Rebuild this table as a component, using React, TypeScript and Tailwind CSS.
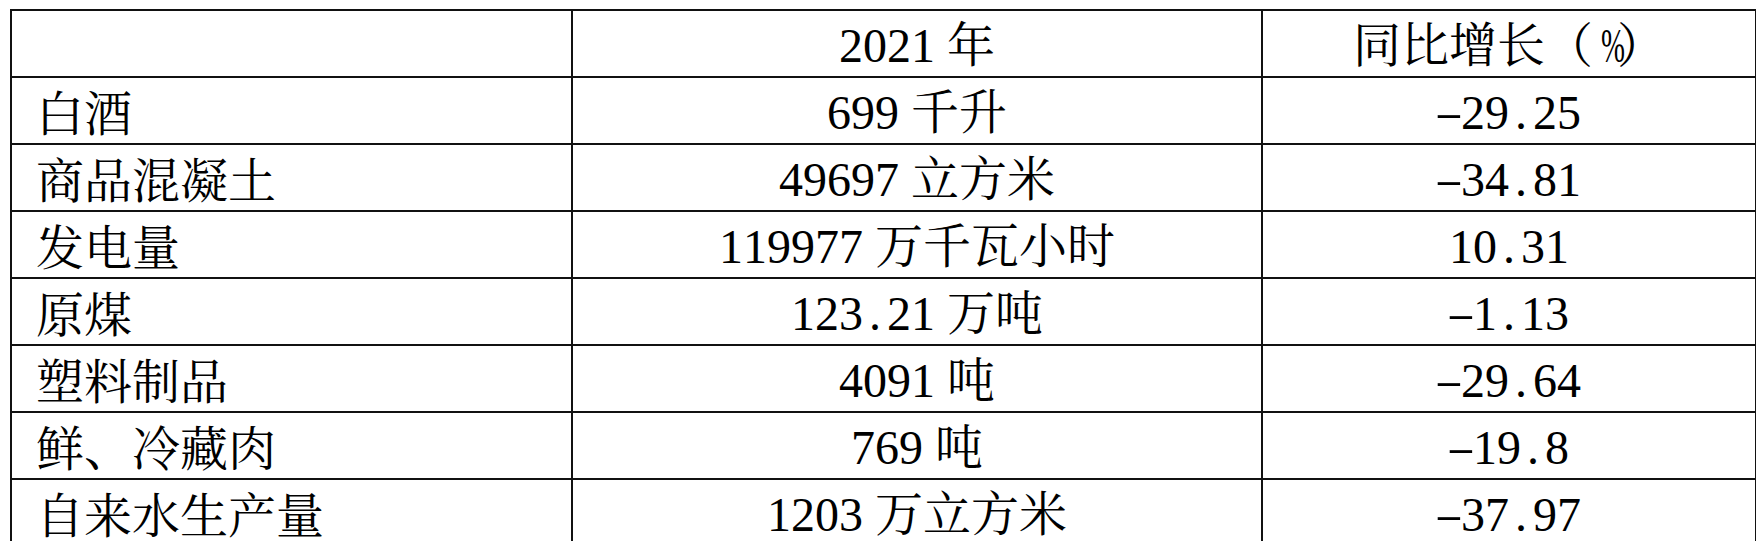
import React from "react";

const rows: [string, string, string][] = [
  ["", "2021 年", "同比增长（%）"],
  ["白酒", "699 千升", "-29.25"],
  ["商品混凝土", "49697 立方米", "-34.81"],
  ["发电量", "119977 万千瓦小时", "10.31"],
  ["原煤", "123.21 万吨", "-1.13"],
  ["塑料制品", "4091 吨", "-29.64"],
  ["鲜、冷藏肉", "769 吨", "-19.8"],
  ["自来水生产量", "1203 万立方米", "-37.97"],
];

function Txt({ s }: { s: string }) {
  const parts: React.ReactNode[] = [];
  Array.from(s).forEach((ch, i) => {
    if (ch === " ") {
      parts.push(
        <span key={i} className="inline-block w-[0.25em] whitespace-pre">
          {" "}
        </span>
      );
    } else if (ch.charCodeAt(0) < 128) {
      let inner: React.ReactNode = ch;
      if (ch === "-") inner = <span className="inline-block scale-x-[1.8] scale-y-[0.8]">-</span>;
      if (ch === "%") inner = <span className="inline-block scale-x-[0.6]">%</span>;
      parts.push(
        <span
          key={i}
          className="inline-block w-[0.5em] text-center font-['Liberation_Serif',serif] whitespace-pre"
        >
          {inner}
        </span>
      );
    } else if (ch === "（" || ch === "）") {
      parts.push(
        <span
          key={i}
          className={
            "inline-block w-[1em] [text-spacing-trim:space-all] " +
            (ch === "（" ? "text-right" : "text-left")
          }
        >
          {ch}
        </span>
      );
    } else {
      parts.push(<span key={i}>{ch}</span>);
    }
  });
  return <>{parts}</>;
}

export default function App() {
  return (
    <div className="h-[541px] w-[1756px] overflow-hidden bg-white pl-[10px] pt-[9px]">
      <table className="w-[1745px] table-fixed border-collapse text-[48px] leading-none text-black font-['Noto_Serif_CJK_SC','Noto_Sans_CJK_SC',serif] [text-spacing-trim:space-all]">
        <colgroup>
          <col className="w-[561px]" />
          <col className="w-[690px]" />
          <col className="w-[494px]" />
        </colgroup>
        <tbody>
          {rows.map((r, i) => (
            <tr key={i} className="h-[67px]">
              <td className="border-2 border-[#111] pl-[24px] text-left align-middle whitespace-nowrap">
                <Txt s={r[0]} />
              </td>
              <td className="border-2 border-[#111] text-center align-middle whitespace-nowrap">
                <Txt s={r[1]} />
              </td>
              <td className="border-2 border-[#111] text-center align-middle whitespace-nowrap">
                <Txt s={r[2]} />
              </td>
            </tr>
          ))}
        </tbody>
      </table>
    </div>
  );
}
